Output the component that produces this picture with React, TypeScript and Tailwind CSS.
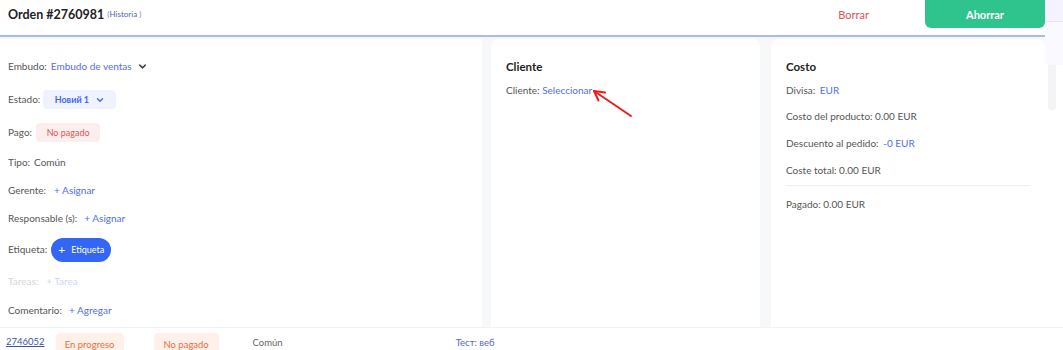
import React from 'react';

const font = { fontFamily: 'Lato, "Noto Sans", sans-serif' };

function Chevron({ className }: { className?: string }) {
  return (
    <svg viewBox="0 0 12 12" className={className} fill="none" stroke="currentColor" strokeWidth={1.6} strokeLinecap="round" strokeLinejoin="round">
      <path d="M3 4.5l3 3 3-3" />
    </svg>
  );
}

export default function App() {
  return (
    <div className="flex h-[350px] w-[1063px] flex-col overflow-hidden bg-white text-[10px] leading-[15px] text-[#555]" style={font}>
      <div className="flex h-[327px]">
        {/* Modal */}
        <div className="flex w-[1045px] flex-col">
          {/* Header */}
          <div className="flex h-[35px] items-start">
            <div className="flex h-[28px] items-center pl-[8px]">
              <span className="text-[12.5px] font-bold text-[#222]">Orden #2760981</span>
              <span className="ml-[3px] text-[8px] text-[#888]">
                (<span className="text-[#4a63c9]">Historia</span>&nbsp;)
              </span>
            </div>
            <div className="ml-auto flex h-[28px] items-center">
              <button className="mr-[56px] text-[11px] text-[#e05151]">Borrar</button>
              <button className="flex h-[28px] w-[120px] items-center justify-center rounded-b-[6px] bg-[#2fc48d] text-[11px] font-bold text-white">
                Ahorrar
              </button>
            </div>
          </div>
          <div className="h-[2px] bg-[#a9b8fb]" />

          {/* Body */}
          <div className="flex flex-1 bg-[#f7f8fa] pt-[2px]">
            {/* Left panel */}
            <div className="flex w-[482px] flex-col bg-white pl-[8px] pt-[11px]">
              <div className="flex h-[33px] items-center gap-[4px]">
                <span>Embudo:</span>
                <span className="text-[#4f6ef0]">Embudo de ventas</span>
                <Chevron className="ml-[1px] h-[11px] w-[11px] text-[#444]" />
              </div>
              <div className="flex h-[33px] items-center gap-[3px]">
                <span>Estado:</span>
                <span className="flex h-[19px] w-[73px] items-center justify-center gap-[6px] rounded-[4px] bg-[#eef3ff] text-[9px] font-bold text-[#4566e8]">
                  Новий 1
                  <Chevron className="h-[10px] w-[10px]" />
                </span>
              </div>
              <div className="flex h-[32px] items-center gap-[4px]">
                <span>Pago:</span>
                <span className="flex h-[19px] w-[64px] items-center justify-center rounded-[4px] bg-[#fdeeee] text-[9px] text-[#e05555]">
                  No pagado
                </span>
              </div>
              <div className="flex h-[29px] items-center gap-[4px]">
                <span>Tipo:</span>
                <span>Común</span>
              </div>
              <div className="flex h-[27px] items-center gap-[8px]">
                <span>Gerente:</span>
                <span className="text-[#4f6ef0]">+ Asignar</span>
              </div>
              <div className="flex h-[29px] items-center gap-[7px]">
                <span>Responsable (s):</span>
                <span className="text-[#4f6ef0]">+ Asignar</span>
              </div>
              <div className="flex h-[33px] items-center gap-[4px]">
                <span>Etiqueta:</span>
                <span className="flex h-[24px] w-[60px] items-center justify-center gap-[6px] rounded-full bg-[#3366f5] text-[9px] text-white">
                  <span className="text-[12px] leading-none">+</span>Etiqueta
                </span>
              </div>
              <div className="flex h-[31px] items-center gap-[8px] text-[#d3d6dc]">
                <span>Tareas:</span>
                <span className="text-[#cdd6fb]">+ Tarea</span>
              </div>
              <div className="flex h-[26px] items-center gap-[7px]">
                <span>Comentario:</span>
                <span className="text-[#4f6ef0]">+ Agregar</span>
              </div>
            </div>

            {/* Cliente card */}
            <div className="relative ml-[9px] flex w-[269px] flex-col rounded-t-[8px] bg-white pl-[15px] pt-[20px]">
              <div className="text-[11.5px] font-bold leading-[16px] text-[#222]">Cliente</div>
              <div className="mt-[8px]">
                Cliente: <span className="text-[#4f6ef0]">Seleccionar</span>
              </div>
              <svg className="absolute left-[98px] top-[48px] h-[32px] w-[46px]" viewBox="0 0 46 32" fill="none" stroke="#ee1c1c" strokeWidth={2} strokeLinecap="round" strokeLinejoin="round">
                <path d="M42 29L5 4" />
                <path d="M5 4l11 1.5M5 4l4.5 9.5" />
              </svg>
            </div>

            {/* Costo card */}
            <div className="ml-[11px] flex flex-1 flex-col rounded-t-[8px] bg-white pl-[15px] pr-[15px] pt-[20px]">
              <div className="text-[11.5px] font-bold leading-[16px] text-[#222]">Costo</div>
              <div className="mt-[8px]">
                Divisa: <span className="ml-[2px] text-[#4f6ef0]">EUR</span>
              </div>
              <div className="mt-[11px]">Costo del producto: 0.00 EUR</div>
              <div className="mt-[12px]">
                Descuento al pedido: <span className="ml-[2px] text-[#4f6ef0]">-0 EUR</span>
              </div>
              <div className="mt-[12px]">Coste total: 0.00 EUR</div>
              <div className="mt-[7px] h-px bg-[#eeeff2]" />
              <div className="mt-[11px]">Pagado: 0.00 EUR</div>
            </div>
          </div>
        </div>

        {/* page behind, right strip */}
        <div className="flex flex-1 flex-col">
          <div className="h-[22px] border-b border-[#e6e6ee] bg-[#f4f3ff]" />
          <div className="h-[43px] bg-[#f9f9ff]" />
          <div className="ml-[3px] mr-[7px] h-[45px] rounded-b-[3px] bg-[#f4f4f6]" />
        </div>
      </div>

      {/* table row behind the modal */}
      <div className="flex h-[23px] items-start border-t border-[#f1f2f4] pt-[5px] text-[9.5px]">
        <span className="ml-[6px] mt-[1px] text-[#3a55b0] underline">2746052</span>
        <span className="ml-[11px] flex h-[20px] w-[68px] items-center justify-center rounded-[4px] bg-[#fff0ea] pt-[3px] text-[#f26b3a]">En progreso</span>
        <span className="ml-[30px] flex h-[20px] w-[65px] items-center justify-center rounded-[4px] bg-[#fff0ea] pt-[3px] text-[#f26b3a]">No pagado</span>
        <span className="ml-[34px] mt-[2px] text-[#666]">Común</span>
        <span className="ml-[173px] mt-[2px] text-[#5566cc]">Тест: веб</span>
      </div>
    </div>
  );
}
